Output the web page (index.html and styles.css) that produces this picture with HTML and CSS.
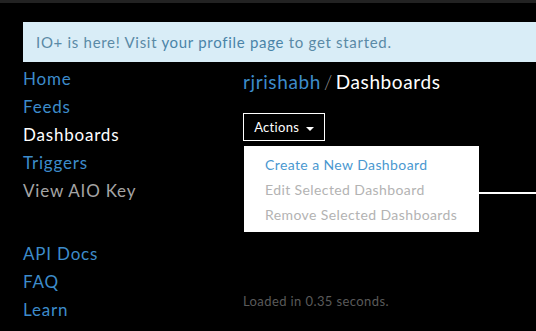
FILE: index.html
```html
<!DOCTYPE html>
<html lang="en">
<head>
    <meta charset="UTF-8">
    <title>Dashboards</title>
    <link rel="stylesheet" href="styles.css">
</head>
<body>
    <div class="topbar"></div>
    <div class="page">
        <div class="alert">IO+ is here! Visit <a href="#">your profile page</a> to get started.</div>
        <div class="layout">
            <!-- sidebar -->
            <ul class="nav">
                <li><a href="#">Home</a></li>
                <li><a href="#">Feeds</a></li>
                <li><a href="#" class="active">Dashboards</a></li>
                <li><a href="#">Triggers</a></li>
                <li><a href="#" class="muted">View AIO Key</a></li>
            </ul>
            <ul class="nav nav-bottom">
                <li><a href="#">API Docs</a></li>
                <li><a href="#">FAQ</a></li>
                <li><a href="#">Learn</a></li>
            </ul>

            <!-- main -->
            <div class="main">
                <h1 class="crumbs"><a href="#">rjrishabh</a><span class="sep">/</span>Dashboards</h1>
                <div class="actions">
                    <button class="btn">Actions <span class="caret"></span></button>
                    <ul class="menu">
                        <li><a href="#">Create a New Dashboard</a></li>
                        <li class="disabled">Edit Selected Dashboard</li>
                        <li class="disabled">Remove Selected Dashboards</li>
                    </ul>
                </div>
                <div class="rule"></div>
                <p class="loaded">Loaded in 0.35 seconds.</p>
            </div>
        </div>
    </div>
</body>
</html>
```

FILE: styles.css
```css
body, html {
    margin: 0;
    padding: 0;
    background-color: #000;
    font-family: Lato, "Liberation Sans", sans-serif;
    overflow: hidden;
}
a {
    text-decoration: none;
    color: #3d8ccb;
}
.topbar {
    height: 3px;
    background-color: #222;
}
.page {
    padding: 19px 0 0 23px;
}
.alert {
    height: 40px;
    line-height: 40px;
    padding-left: 13px;
    font-size: 15px;
    letter-spacing: 0.7px;
    color: #5a8aa6;
    background-color: #d9edf7;
}
.alert a {
    color: #4a84a8;
}
.layout {
    display: grid;
    grid-template-columns: 220px 1fr;
    grid-template-rows: auto 1fr;
}
.nav {
    list-style: none;
    margin: 0;
    padding: 3px 0 0 0;
    grid-column: 1;
}
.nav li {
    font-size: 17px;
    line-height: 28px;
    letter-spacing: 0.8px;
}
.nav a.active {
    color: #fff;
}
.nav a.muted {
    color: #a5a5a5;
}
.nav-bottom {
    grid-row: 2;
    padding-top: 35px;
}
.main {
    grid-column: 2;
    grid-row: 1 / 3;
    padding-top: 6px;
}
.crumbs {
    margin: 0;
    font-size: 19px;
    font-weight: normal;
    line-height: 28px;
    letter-spacing: 0.6px;
    color: #fff;
}
.crumbs .sep {
    color: #999;
    margin: 0 3px;
    font-weight: 300;
}
.actions {
    position: relative;
    margin-top: 17px;
}
.btn {
    width: 82px;
    height: 28px;
    padding: 0;
    font-family: inherit;
    font-size: 13px;
    letter-spacing: 0.3px;
    color: #fff;
    background: #000;
    border: 1px solid #fff;
}
.caret {
    display: inline-block;
    margin-left: 3px;
    vertical-align: middle;
    border-top: 4px solid #fff;
    border-left: 4px solid transparent;
    border-right: 4px solid transparent;
}
.menu {
    position: absolute;
    top: 33px;
    left: 1px;
    width: 235px;
    height: 86px;
    margin: 0;
    padding: 6px 0 0 0;
    box-sizing: border-box;
    list-style: none;
    background-color: #fff;
    z-index: 2;
}
.menu li {
    padding-left: 21px;
    font-size: 14px;
    line-height: 25px;
    letter-spacing: 0.4px;
    color: #b3b3b3;
}
.menu li a {
    color: #4a98d0;
}
.rule {
    height: 2px;
    margin: 51px 0 0 2px;
    background-color: #fff;
}
.loaded {
    margin: 99px 0 0 0;
    font-size: 13px;
    letter-spacing: 0.4px;
    color: #5a5a5a;
}
```
